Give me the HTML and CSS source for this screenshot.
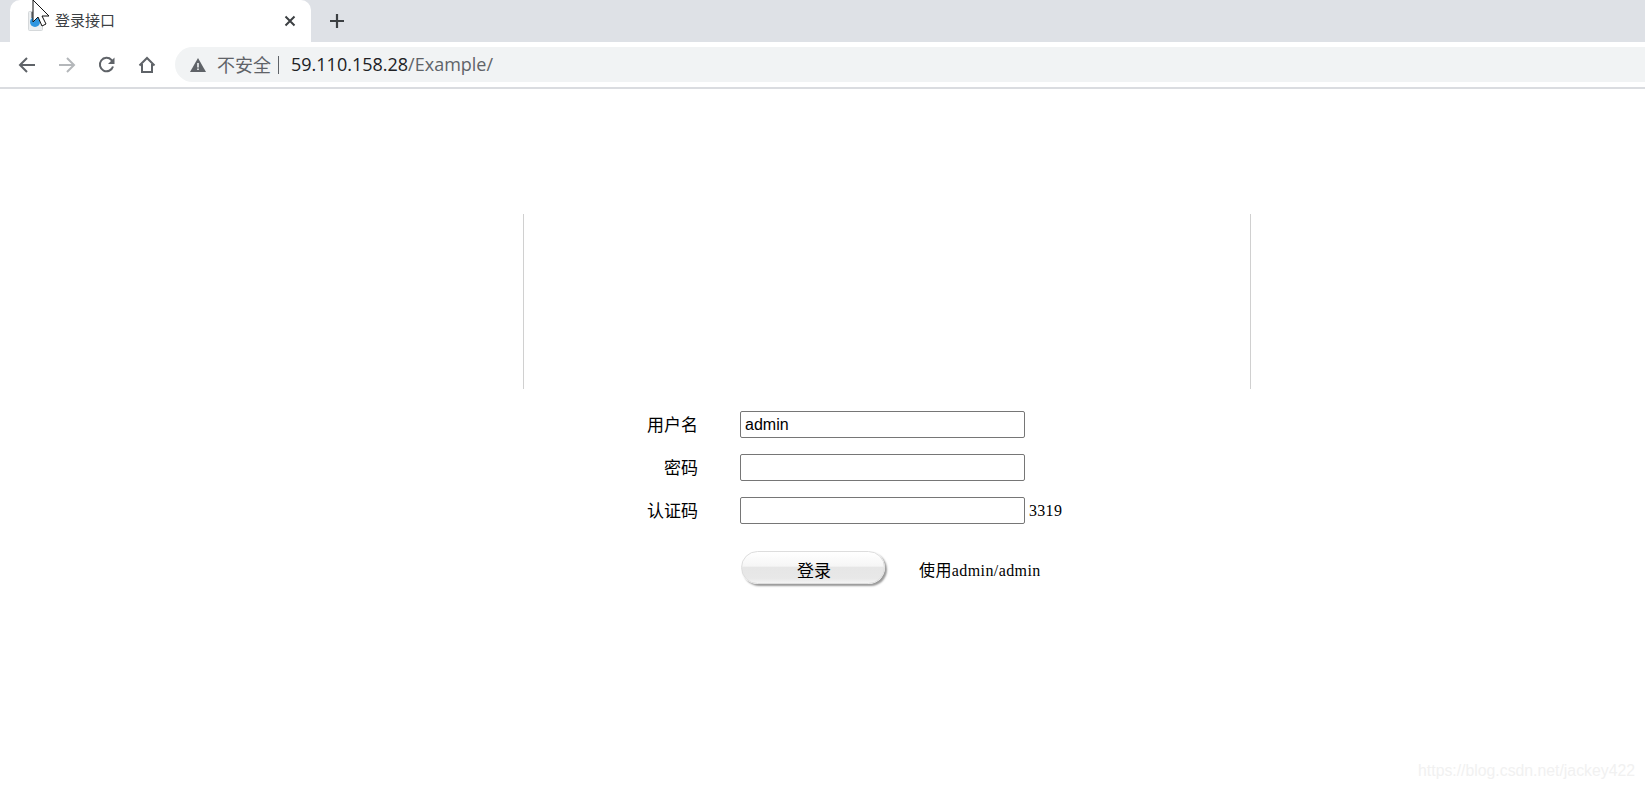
FILE: index.html
```html
<!DOCTYPE html>
<html lang="zh-CN">
<head>
    <meta charset="UTF-8">
    <title>登录接口</title>
    <link rel="stylesheet" href="styles.css">
</head>
<body>
    <div class="tabstrip">
        <div class="tab">
            <svg class="favicon" width="15" height="20" viewBox="0 0 15 20">
                <rect x="0.500" y="0.500" width="14" height="19" rx="1" fill="#eceff1" stroke="#d5d8da"/>
                <rect x="3" y="1" width="5" height="6" fill="#8b8f94"/>
                <circle cx="7" cy="11" r="5" fill="#2f96e0"/>
            </svg>
            <span class="tab-title">登录接口</span>
            <svg class="tab-close" width="12" height="12" viewBox="0 0 12 12">
                <path d="M1.5 1.5l9 9M10.5 1.5l-9 9" stroke="#3c4043" stroke-width="2" fill="none"/>
            </svg>
        </div>
        <svg class="new-tab" width="16" height="16" viewBox="0 0 16 16">
            <path d="M8 1v14M1 8h14" stroke="#3c4043" stroke-width="2.2" fill="none"/>
        </svg>
    </div>

    <div class="toolbar">
        <svg class="tool-icon" width="20" height="20" viewBox="0 0 20 20">
            <path d="M18 10H3.5M10 3l-7 7 7 7" stroke="#5f6368" stroke-width="2" fill="none"/>
        </svg>
        <svg class="tool-icon" width="20" height="20" viewBox="0 0 20 20">
            <path d="M2 10h14.500M10 3l7 7-7 7" stroke="#b4b7ba" stroke-width="2" fill="none"/>
        </svg>
        <svg class="tool-icon" width="20" height="20" viewBox="0 0 20 20">
            <path d="M16 11.500A6.700 6.700 0 1 1 14.500 5L16.500 7" stroke="#5f6368" stroke-width="2" fill="none"/>
            <path d="M17.500 2.500v6.500H11z" fill="#5f6368"/>
        </svg>
        <svg class="tool-icon" width="20" height="20" viewBox="0 0 20 20">
            <path d="M2.500 10.500L10 3l7.500 7.500M5 9v8h10V9" stroke="#5f6368" stroke-width="2" fill="none"/>
        </svg>
        <div class="omnibox">
            <svg class="warn" width="16" height="14" viewBox="0 0 16 14">
                <path d="M8 0l8 14H0z" fill="#5f6368"/>
                <path d="M7.200 5h1.600v4.500H7.200zM7.200 10.500h1.600V12H7.200z" fill="#f1f3f4"/>
            </svg>
            <span class="not-secure">不安全</span>
            <span class="divider"></span>
            <span class="host">59.110.158.28</span><span class="path">/Example/</span>
        </div>
    </div>

    <div class="page">
        <div class="banner"></div>

        <form class="login-form">
            <label class="field-label">用户名</label>
            <div class="field"><input class="text-input" type="text" value="admin"></div>

            <label class="field-label">密码</label>
            <div class="field"><input class="text-input" type="password"></div>

            <label class="field-label">认证码</label>
            <div class="field"><input class="text-input" type="text"><span class="captcha">3319</span></div>

            <div class="actions">
                <button class="login-btn" type="button">登录</button>
                <span class="hint">使用admin/admin</span>
            </div>
        </form>
    </div>

    <!-- screenshot overlays -->
    <svg class="cursor" width="18" height="28" viewBox="0 0 18 28">
        <path d="M1 0v22l5-5 4 9 4-2-4-8h7z" fill="#fff" stroke="#111" stroke-width="1"/>
    </svg>
    <div class="watermark">https://blog.csdn.net/jackey422</div>
</body>
</html>
```

FILE: styles.css
```css
html, body {
    height: 100%;
}
body {
    margin: 0;
    background: #fff;
    color: #000;
    font-family: "Liberation Serif", "Noto Sans CJK SC", serif;
    overflow: hidden;
    position: relative;
}
.tabstrip {
    height: 42px;
    background: #dee1e6;
    display: flex;
    align-items: center;
}
.tab {
    width: 301px;
    height: 42px;
    margin-left: 10px;
    background: #fff;
    border-radius: 10px 10px 0 0;
    display: flex;
    align-items: center;
    box-sizing: border-box;
    padding-left: 18px;
}
.favicon {
    margin-right: 12px;
}
.tab-title {
    flex: 1;
    font-family: "Noto Sans CJK SC", sans-serif;
    font-size: 15px;
    line-height: 20px;
    margin-bottom: 2px;
    color: #3c4043;
}
.tab-close {
    margin-right: 15px;
}
.new-tab {
    margin-left: 18px;
}
.toolbar {
    height: 45px;
    background: #fff;
    border-bottom: 2px solid #dadce0;
    display: flex;
    align-items: center;
    padding-left: 17px;
}
.tool-icon {
    margin-right: 20px;
}
.omnibox {
    flex: 1;
    height: 35px;
    margin-left: -2px;
    background: #f1f3f4;
    border-radius: 18px 0 0 18px;
    display: flex;
    align-items: center;
    padding-left: 15px;
    font-family: "Open Sans", "Noto Sans CJK SC", sans-serif;
    font-size: 18px;
}
.warn {
    margin-right: 11px;
}
.not-secure {
    color: #5f6368;
    font-family: "Noto Sans CJK SC", sans-serif;
    font-size: 18px;
    line-height: 24px;
    margin-bottom: 2px;
}
.divider {
    width: 1px;
    height: 18px;
    background: #5f6368;
    margin: 0 12px 0 7px;
}
.host {
    color: #202124;
    line-height: 24px;
    margin-bottom: 2px;
}
.path {
    color: #5f6368;
    line-height: 24px;
    margin-bottom: 2px;
}
.page {
    padding-top: 125px;
}
.banner {
    width: 726px;
    height: 175px;
    margin-left: 523px;
    border-left: 1px solid #d0d0d0;
    border-right: 1px solid #d0d0d0;
}
.login-form {
    display: grid;
    grid-template-columns: 175px 1fr;
    grid-auto-rows: 27px;
    row-gap: 16px;
    margin: 22px 0 0 523px;
    font-size: 16px;
}
.field-label {
    font-family: "Noto Sans CJK SC", sans-serif;
    font-size: 17px;
    text-align: right;
    line-height: 25px;
}
.field {
    margin-left: 42px;
    display: flex;
    align-items: center;
}
.text-input {
    width: 285px;
    height: 27px;
    box-sizing: border-box;
    border: 1px solid #767676;
    border-radius: 2px;
    padding: 1px 4px;
    font-family: "Liberation Sans", sans-serif;
    font-size: 16px;
    color: #000;
    background: #fff;
    margin: 0;
}
.captcha {
    margin-left: 4px;
    font-size: 16px;
    letter-spacing: 0.3px;
}
.actions {
    grid-column: 2;
    display: flex;
    align-items: center;
    margin: 10px 0 0 43px;
    height: 34px;
}
.login-btn {
    width: 144px;
    height: 33px;
    padding: 4px 0 0 2px;
    border: 1px solid #ddd;
    border-radius: 17px;
    background: linear-gradient(#fff 0%, #f6f6f6 45%, #e6e6e6 50%, #e8e8e8 85%, #f4f4f4 100%);
    box-shadow: 2px 2px 2px #999;
    font-family: "Noto Sans CJK SC", sans-serif;
    font-size: 17px;
    color: #000;
}
.hint {
    margin-left: 34px;
    padding-top: 4px;
    font-size: 16px;
    letter-spacing: 0.4px;
}
.hint, .captcha {
    font-family: "Liberation Serif", "Noto Sans CJK SC", serif;
}
.cursor {
    position: absolute;
    left: 32px;
    top: 0;
}
.watermark {
    position: absolute;
    right: 10px;
    top: 762px;
    font-family: "Liberation Sans", sans-serif;
    font-size: 15.800px;
    color: #f1f1f1;
}
```
